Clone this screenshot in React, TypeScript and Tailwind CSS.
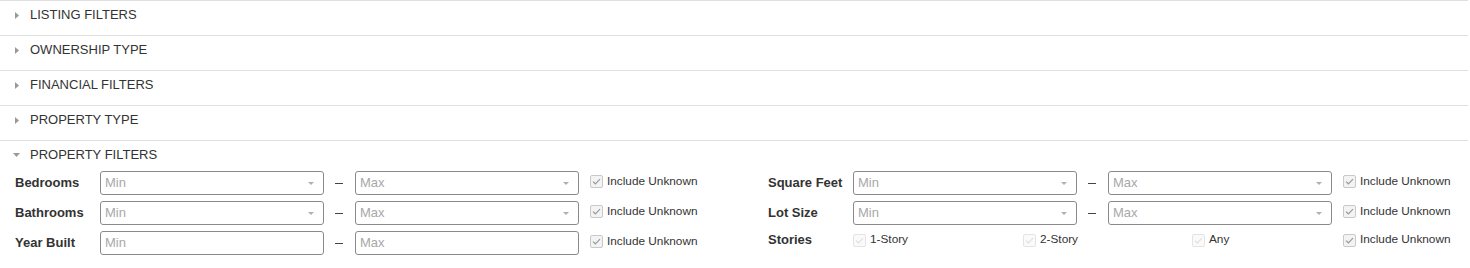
import React from 'react'

// ============================================================================
// Small pieces
// ============================================================================

function Caret({ open }: { open?: boolean }) {
  return open ? (
    <svg width="7" height="4" viewBox="0 0 7 4" className="shrink-0">
      <path d="M0 0 L7 0 L3.5 4 Z" fill="#9a9a9a" />
    </svg>
  ) : (
    <svg width="4" height="7" viewBox="0 0 4 7" className="shrink-0">
      <path d="M0 0 L4 3.5 L0 7 Z" fill="#9a9a9a" />
    </svg>
  )
}

function SectionHeader({ title, open }: { title: string; open?: boolean }) {
  return (
    <div className="flex items-center h-[16px] leading-4 text-[13px] text-[#333]">
      <span className="w-[30px] flex justify-center pl-[3px]">
        <Caret open={open} />
      </span>
      <span className="uppercase">{title}</span>
    </div>
  )
}

function Check({ disabled, label }: { disabled?: boolean; label: string }) {
  return (
    <label className="flex items-center gap-[4px] text-[11.8px] text-[#333] whitespace-nowrap">
      <span
        className={
          disabled
            ? 'w-[13px] h-[13px] rounded-[2px] border border-[#e4e4e4] bg-[#fafafa] flex items-center justify-center'
            : 'w-[13px] h-[13px] rounded-[2px] border border-[#c9c9c9] bg-[#f3f3f3] flex items-center justify-center'
        }
      >
        <svg width="9" height="7" viewBox="0 0 9 7">
          <path
            d="M1 3.6 L3.4 5.8 L8 1.2"
            fill="none"
            stroke={disabled ? '#e0e0e0' : '#9a9a9a'}
            strokeWidth="1.2"
          />
        </svg>
      </span>
      {label}
    </label>
  )
}

function Field({ placeholder, select }: { placeholder: string; select?: boolean }) {
  return (
    <div className="w-[224px] h-[24px] border border-[#8a8a8a] rounded-[3px] bg-white flex items-center pl-[4px] pr-[9px]">
      <input
        readOnly
        placeholder={placeholder}
        className="flex-1 min-w-0 outline-none bg-transparent text-[13px] text-[#333] placeholder:text-[#a8a8a8]"
      />
      {select && (
        <svg width="6" height="3" viewBox="0 0 6 3">
          <path d="M0 0 L6 0 L3 3 Z" fill="#b0b0b0" />
        </svg>
      )}
    </div>
  )
}

function Dash() {
  return (
    <div className="w-[31px] flex justify-center">
      <span className="w-[8px] h-px bg-[#444] ml-[-2px]" />
    </div>
  )
}

function RangeRow({ label, select }: { label: string; select?: boolean }) {
  return (
    <div className="flex items-center h-[24px]">
      <div className="w-[85px] text-[13px] font-bold text-[#333]">{label}</div>
      <Field placeholder="Min" select={select} />
      <Dash />
      <Field placeholder="Max" select={select} />
      <div className="pl-[11px] pb-[3px]">
        <Check label="Include Unknown" />
      </div>
    </div>
  )
}

// ============================================================================
// Page
// ============================================================================

export default function App() {
  const closed = ['Listing Filters', 'Ownership Type', 'Financial Filters', 'Property Type']

  return (
    <div
      className="w-[1468px] bg-white"
      style={{ fontFamily: '"Liberation Sans", Arial, sans-serif' }}
    >
      {closed.map((t) => (
        <div key={t} className="h-[35px] border-t border-[#e0e0e0] pt-[6px]">
          <SectionHeader title={t} />
        </div>
      ))}

      <div className="border-t border-[#e0e0e0] pt-[6px] pb-[13px]">
        <SectionHeader title="Property Filters" open />
        <div className="flex pl-[15px] pt-[8px]">
          {/* Left column */}
          <div className="w-[753px] flex flex-col gap-[6px]">
            <RangeRow label="Bedrooms" select />
            <RangeRow label="Bathrooms" select />
            <RangeRow label="Year Built" />
          </div>

          {/* Right column */}
          <div className="flex flex-col gap-[6px]">
            <RangeRow label="Square Feet" select />
            <RangeRow label="Lot Size" select />
            <div className="flex items-center h-[18px]">
              <div className="w-[85px] text-[13px] font-bold text-[#333]">Stories</div>
              <div className="w-[170px]">
                <Check disabled label="1-Story" />
              </div>
              <div className="w-[169px]">
                <Check disabled label="2-Story" />
              </div>
              <div className="w-[151px]">
                <Check disabled label="Any" />
              </div>
              <Check label="Include Unknown" />
            </div>
          </div>
        </div>
      </div>
    </div>
  )
}
